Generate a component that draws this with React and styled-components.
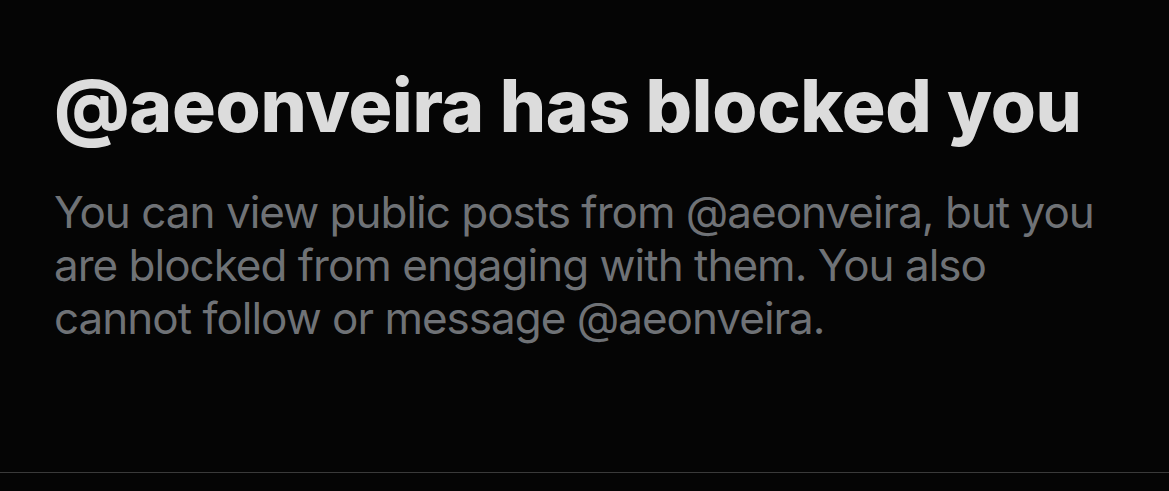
import React from "react";
import styled, { createGlobalStyle } from "styled-components";

const Global = createGlobalStyle`
  html, body { margin: 0; padding: 0; background: #050505; }
  body { width: 1169px; height: 491px; overflow: hidden; }
`;

const Page = styled.div`
  width: 1169px;
  height: 491px;
  background: #050505;
  display: flex;
  flex-direction: column;
  font-family: Inter, "Noto Sans", sans-serif;
`;

const Content = styled.div`
  flex: 1;
  padding: 66px 0 0 54px;
  display: flex;
  flex-direction: column;
`;

const Title = styled.h1`
  margin: 0;
  font-size: 73px;
  line-height: 80px;
  font-weight: 800;
  color: #dcdcdc;
  letter-spacing: -0.3px;
  white-space: nowrap;
`;

const Body = styled.p`
  margin: 40px 0 0;
  font-size: 44px;
  line-height: 53px;
  font-weight: 400;
  color: #6f7276;
  letter-spacing: -1px;
  white-space: nowrap;
`;

const Divider = styled.div`
  height: 1px;
  background: #3a3a3a;
  margin-bottom: 18px;
`;

export default function App() {
  return (
    <Page>
      <Global />
      <Content>
        <Title>@aeonveira has blocked you</Title>
        <Body>
          You can view public posts from @aeonveira, but you
          <br />
          are blocked from engaging with them. You also
          <br />
          cannot follow or message @aeonveira.
        </Body>
      </Content>
      <Divider />
    </Page>
  );
}
